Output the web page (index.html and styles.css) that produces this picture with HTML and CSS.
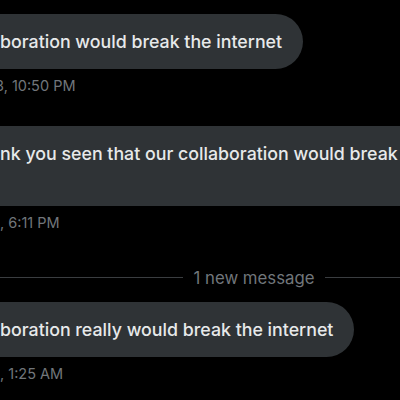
FILE: index.html
```html
<!DOCTYPE html>
<html lang="en">
<head>
<meta charset="utf-8">
<title>Messages</title>
<link rel="stylesheet" href="styles.css">
</head>
<body>
<main class="thread">
  <section class="msg msg-first">
    <div class="bubble">boration would break the internet</div>
    <div class="time time-cut">3, 10:50 PM</div>
  </section>
  <section class="msg msg-wide">
    <div class="bubble bubble-wide">nk you seen that our collaboration would break<br>&nbsp;</div>
    <div class="time">, 6:11 PM</div>
  </section>
  <div class="divider">
    <span class="rule"></span>
    <span class="divider-text">1 new message</span>
    <span class="rule"></span>
  </div>
  <section class="msg">
    <div class="bubble">boration really would break the internet</div>
    <div class="time">, 1:25 AM</div>
  </section>
</main>
</body>
</html>
```
FILE: styles.css
```css
html, body {
  margin: 0;
  padding: 0;
  background: #000;
  overflow: hidden;
  width: 400px;
  height: 400px;
}

.thread {
  font-family: "Inter", "Roboto", "Liberation Sans", sans-serif;
  color: #e7e9ea;
  padding-top: 14px;
}

.msg {
  display: flex;
  flex-direction: column;
  align-items: flex-start;
}

.msg-wide {
  margin-top: 30.5px;
}

.bubble {
  background: #2f3336;
  font-size: 17.8px;
  font-weight: 500;
  line-height: 25px;
  padding: 15px 21px 15px 40px;
  margin-left: -40px;
  border-radius: 28px;
  white-space: nowrap;
}

.bubble-wide {
  border-radius: 28px 0 0 28px;
  margin-right: -60px;
}

.time {
  margin-top: 6.5px;
  font-size: 14.5px;
  line-height: 20px;
  color: #71767b;
  white-space: nowrap;
}

.time-cut {
  margin-left: -5px;
}

.divider {
  display: flex;
  align-items: center;
  gap: 10px;
  margin-top: 35px;
  margin-bottom: 14.5px;
  margin-right: -108px;
  font-size: 16.8px;
  line-height: 20px;
  color: #71767b;
}

.rule {
  flex: 1;
  height: 1px;
  background: #3a3d40;
}

.divider-text {
  white-space: nowrap;
}
```
